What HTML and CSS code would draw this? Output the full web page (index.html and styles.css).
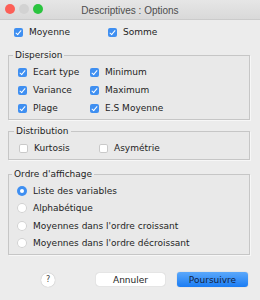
FILE: index.html
```html
<!DOCTYPE html>
<html lang="fr">
<head>
  <meta charset="UTF-8">
  <title>Descriptives : Options</title>
  <link rel="stylesheet" href="styles.css">
</head>
<body>
  <div class="window">
    <div class="titlebar">
      <div class="lights">
        <span class="light red"></span>
        <span class="light grey"></span>
        <span class="light green"></span>
      </div>
      <div class="title">Descriptives : Options</div>
    </div>

    <div class="top-row">
      <label class="opt"><span class="box on"></span>Moyenne</label>
      <label class="opt"><span class="box on"></span>Somme</label>
    </div>

    <fieldset class="group dispersion">
      <legend>Dispersion</legend>
      <div class="grid">
        <label class="opt"><span class="box on"></span>Ecart type</label>
        <label class="opt"><span class="box on"></span>Minimum</label>
        <label class="opt"><span class="box on"></span>Variance</label>
        <label class="opt"><span class="box on"></span>Maximum</label>
        <label class="opt"><span class="box on"></span>Plage</label>
        <label class="opt"><span class="box on"></span>E.S Moyenne</label>
      </div>
    </fieldset>

    <fieldset class="group distribution">
      <legend>Distribution</legend>
      <div class="grid">
        <label class="opt"><span class="box"></span>Kurtosis</label>
        <label class="opt"><span class="box"></span>Asymétrie</label>
      </div>
    </fieldset>

    <fieldset class="group ordre">
      <legend>Ordre d'affichage</legend>
      <div class="list">
        <label class="opt"><span class="radio on"></span>Liste des variables</label>
        <label class="opt"><span class="radio"></span>Alphabétique</label>
        <label class="opt"><span class="radio"></span>Moyennes dans l'ordre croissant</label>
        <label class="opt"><span class="radio"></span>Moyennes dans l'ordre décroissant</label>
      </div>
    </fieldset>

    <div class="buttons">
      <span class="help">?</span>
      <span class="spacer"></span>
      <button class="btn">Annuler</button>
      <button class="btn primary">Poursuivre</button>
    </div>
  </div>
</body>
</html>
```

FILE: styles.css
```css
body {
  margin: 0;
  font-family: "DejaVu Sans", sans-serif;
  font-size: 9px;
  color: #1e1e1e;
}
.window {
  width: 260px;
  height: 300px;
  background-color: #ececec;
  overflow: hidden;
}
.titlebar {
  display: grid;
  grid-template-columns: 1fr auto 1fr;
  align-items: center;
  height: 19px;
  background: linear-gradient(#e6e6e6, #d9d9d9);
  border-bottom: 1px solid #cbcbcb;
}
.lights {
  display: flex;
  gap: 4px;
  padding-left: 5px;
  margin-top: -2px;
}
.light {
  width: 10px;
  height: 10px;
  border-radius: 50%;
}
.red {
  background-color: #fc5f57;
}
.grey {
  background-color: #d2d2d2;
}
.green {
  background-color: #2ac43f;
}
.title {
  font-family: "Liberation Sans", Arial, sans-serif;
  font-size: 10px;
  color: #4d4d4d;
  margin-top: 1px;
}
.opt {
  display: flex;
  align-items: center;
  gap: 6px;
  height: 18px;
  white-space: nowrap;
}
.box {
  position: relative;
  width: 9px;
  height: 9px;
  border-radius: 2px;
  background-color: #fff;
  box-shadow: inset 0 0 0 1px #c9c9c9;
  flex: none;
}
.box.on {
  background-color: #3f8ff1;
  box-shadow: none;
}
.box.on::after {
  content: "";
  position: absolute;
  left: 3px;
  top: 1px;
  width: 2px;
  height: 5px;
  border: solid #fff;
  border-width: 0 1.2px 1.2px 0;
  transform: rotate(40deg);
}
.radio {
  position: relative;
  width: 10px;
  height: 10px;
  border-radius: 50%;
  background-color: #fff;
  box-shadow: inset 0 0 0 1px #d0d0d0;
  flex: none;
}
.radio.on {
  background-color: #3f8ff1;
  box-shadow: none;
}
.radio.on::after {
  content: "";
  position: absolute;
  left: 3px;
  top: 3px;
  width: 4px;
  height: 4px;
  border-radius: 50%;
  background-color: #fff;
}
.top-row {
  display: grid;
  grid-template-columns: 94px auto;
  padding: 3px 0 0 14px;
}
.group {
  margin: 0 10px 0 8px;
  padding: 2px 0 2px 9px;
  border: 1px solid #c6c6c6;
  box-shadow: 1px 1px 0 #f7f7f7;
  background-color: #e9e9e9;
  min-width: 0;
}
.group legend {
  line-height: 12px;
  padding: 0 2px;
  margin-left: -5px;
}
.dispersion {
  margin-top: 8px;
}
.distribution {
  margin-top: 5px;
  padding-left: 10px;
}
.ordre {
  margin-top: 8px;
  padding-left: 8px;
}
.grid {
  display: grid;
  grid-template-columns: 72px auto;
}
.distribution .grid {
  grid-template-columns: 80px auto;
}
.list .opt {
  height: 17.5px;
}
.buttons {
  display: flex;
  align-items: center;
  height: 15px;
  margin-top: 17px;
  padding: 0 12px 0 41px;
}
.help {
  width: 14px;
  height: 14px;
  border-radius: 50%;
  background-color: #fff;
  box-shadow: 0 0 1px rgba(0, 0, 0, 0.35);
  font-size: 8px;
  color: #444;
  display: flex;
  align-items: center;
  justify-content: center;
}
.spacer {
  flex: 1;
}
.btn {
  font-family: "DejaVu Sans", sans-serif;
  font-size: 9px;
  color: #1e1e1e;
  width: 69px;
  height: 13px;
  padding: 0;
  border: none;
  border-radius: 3px;
  background-color: #fff;
  box-shadow: 0 0 1px rgba(0, 0, 0, 0.3);
  margin-right: 12px;
}
.btn.primary {
  width: 71px;
  height: 15px;
  margin-right: 0;
  color: #13233f;
  background: linear-gradient(#5ba8fb, #1a7cf3);
}
```
